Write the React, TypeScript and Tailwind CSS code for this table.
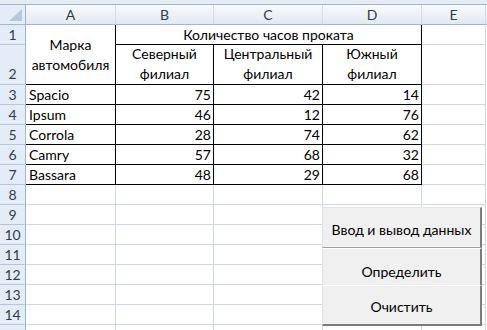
import React from "react";

const font = { fontFamily: "Lato, 'Open Sans', 'Liberation Sans', sans-serif" };

const data: [string, number, number, number][] = [
  ["Spacio", 75, 42, 14],
  ["Ipsum", 46, 12, 76],
  ["Corrola", 28, 74, 62],
  ["Camry", 57, 68, 32],
  ["Bassara", 48, 29, 68],
];

function RowHead({ n, bottom }: { n: string; bottom?: boolean }) {
  return (
    <div
      className={
        "flex justify-center bg-[#e4ecf7] border-r border-b border-r-[#9eb6ce] border-b-[#b4c6db] text-[14px] text-[#303c4c] leading-[19px] " +
        (bottom ? "items-end pb-[1px]" : "items-center")
      }
    >
      {n}
    </div>
  );
}

function ColHead({ l }: { l: string }) {
  return (
    <div className="flex items-center justify-center bg-gradient-to-b from-[#f8fafd] to-[#e2e9f2] border-r border-r-[#d2dbe6] border-b border-b-[#9eb6ce] text-[14px] text-[#303c4c]">
      {l}
    </div>
  );
}

function Grid() {
  return <div className="border-r border-b border-[#d0d7e5] bg-white" />;
}

export default function App() {
  return (
    <div className="relative w-[487px] h-[330px] overflow-hidden bg-white text-black" style={font}>
      <div className="grid grid-cols-[26px_90px_98px_109px_99px_64px_1fr] grid-rows-[5px_20px_20px_40px_repeat(12,20px)_6px] h-[330px]">
        {/* top band */}
        <div className="col-span-7 bg-[#e6ecf4] border-b border-[#9eb6ce]" />

        {/* header row */}
        <div className="relative bg-[#e4ecf7] border-r border-b border-[#9eb6ce]">
          <svg className="absolute right-[3px] bottom-[3px]" width="13" height="12" viewBox="0 0 13 12">
            <polygon points="13,0 13,12 0,12" fill="#b9c9dc" />
          </svg>
        </div>
        <ColHead l="A" />
        <ColHead l="B" />
        <ColHead l="C" />
        <ColHead l="D" />
        <ColHead l="E" />
        <div className="bg-gradient-to-b from-[#f8fafd] to-[#e2e9f2] border-b border-[#9eb6ce]" />

        {/* row 1 */}
        <RowHead n="1" />
        <div className="row-span-2 flex flex-col items-center justify-center border-r border-b border-black text-[14px] leading-[20px]">
          <span>Марка</span>
          <span>автомобиля</span>
        </div>
        <div className="col-span-3 flex items-center justify-center border-r border-b border-black text-[14px] leading-[19px]">
          Количество часов проката
        </div>
        <Grid />
        <div />

        {/* row 2 */}
        <RowHead n="2" bottom />
        <div className="flex flex-col items-center justify-end border-r border-b border-black text-[14px] leading-[20px] pb-[0px]">
          <span>Северный</span>
          <span>филиал</span>
        </div>
        <div className="flex flex-col items-center justify-end border-r border-b border-black text-[14px] leading-[20px]">
          <span>Центральный</span>
          <span>филиал</span>
        </div>
        <div className="flex flex-col items-center justify-end border-r border-b border-black text-[14px] leading-[20px]">
          <span>Южный</span>
          <span>филиал</span>
        </div>
        <Grid />
        <div />

        {data.map((r, i) => (
          <React.Fragment key={r[0]}>
            <RowHead n={String(i + 3)} />
            <div className="flex items-center pl-[3px] border-r border-b border-black text-[14px] leading-[19px]">{r[0]}</div>
            <div className="flex items-center justify-end pr-[2px] border-r border-b border-black text-[14px] leading-[19px]">{r[1]}</div>
            <div className="flex items-center justify-end pr-[2px] border-r border-b border-black text-[14px] leading-[19px]">{r[2]}</div>
            <div className="flex items-center justify-end pr-[2px] border-r border-b border-black text-[14px] leading-[19px]">{r[3]}</div>
            <Grid />
            <div />
          </React.Fragment>
        ))}

        {[8, 9, 10, 11, 12, 13, 14, 15].map((n) => (
          <React.Fragment key={n}>
            <RowHead n={n === 15 ? "" : String(n)} />
            <Grid />
            <Grid />
            <Grid />
            <Grid />
            <Grid />
            <div />
          </React.Fragment>
        ))}
      </div>

      {/* buttons overlay */}
      <div className="absolute left-[322px] top-[207px] w-[160px] flex flex-col text-[14px] text-black">
        <div className="h-[41px] flex items-center justify-center pt-[3px] bg-[#f0f0f0] border-l border-t border-[#e3e3e3] border-r-2 border-r-[#7c7c7c] border-b border-b-[#a0a0a0]">
          Ввод и вывод данных
        </div>
        <div className="h-[37px] flex items-center justify-center pt-[8px] bg-[#f0f0f0] border-l border-t border-[#ffffff] border-l-[#e3e3e3] border-r-2 border-r-[#7c7c7c]">
          Определить
        </div>
        <div className="h-[41px] flex items-center justify-center pt-[3px] bg-[#f0f0f0] border-l border-t border-t-white border-l-[#e3e3e3] border-r-2 border-r-[#7c7c7c] border-b-2 border-b-[#7c7c7c]">
          Очистить
        </div>
      </div>
    </div>
  );
}
